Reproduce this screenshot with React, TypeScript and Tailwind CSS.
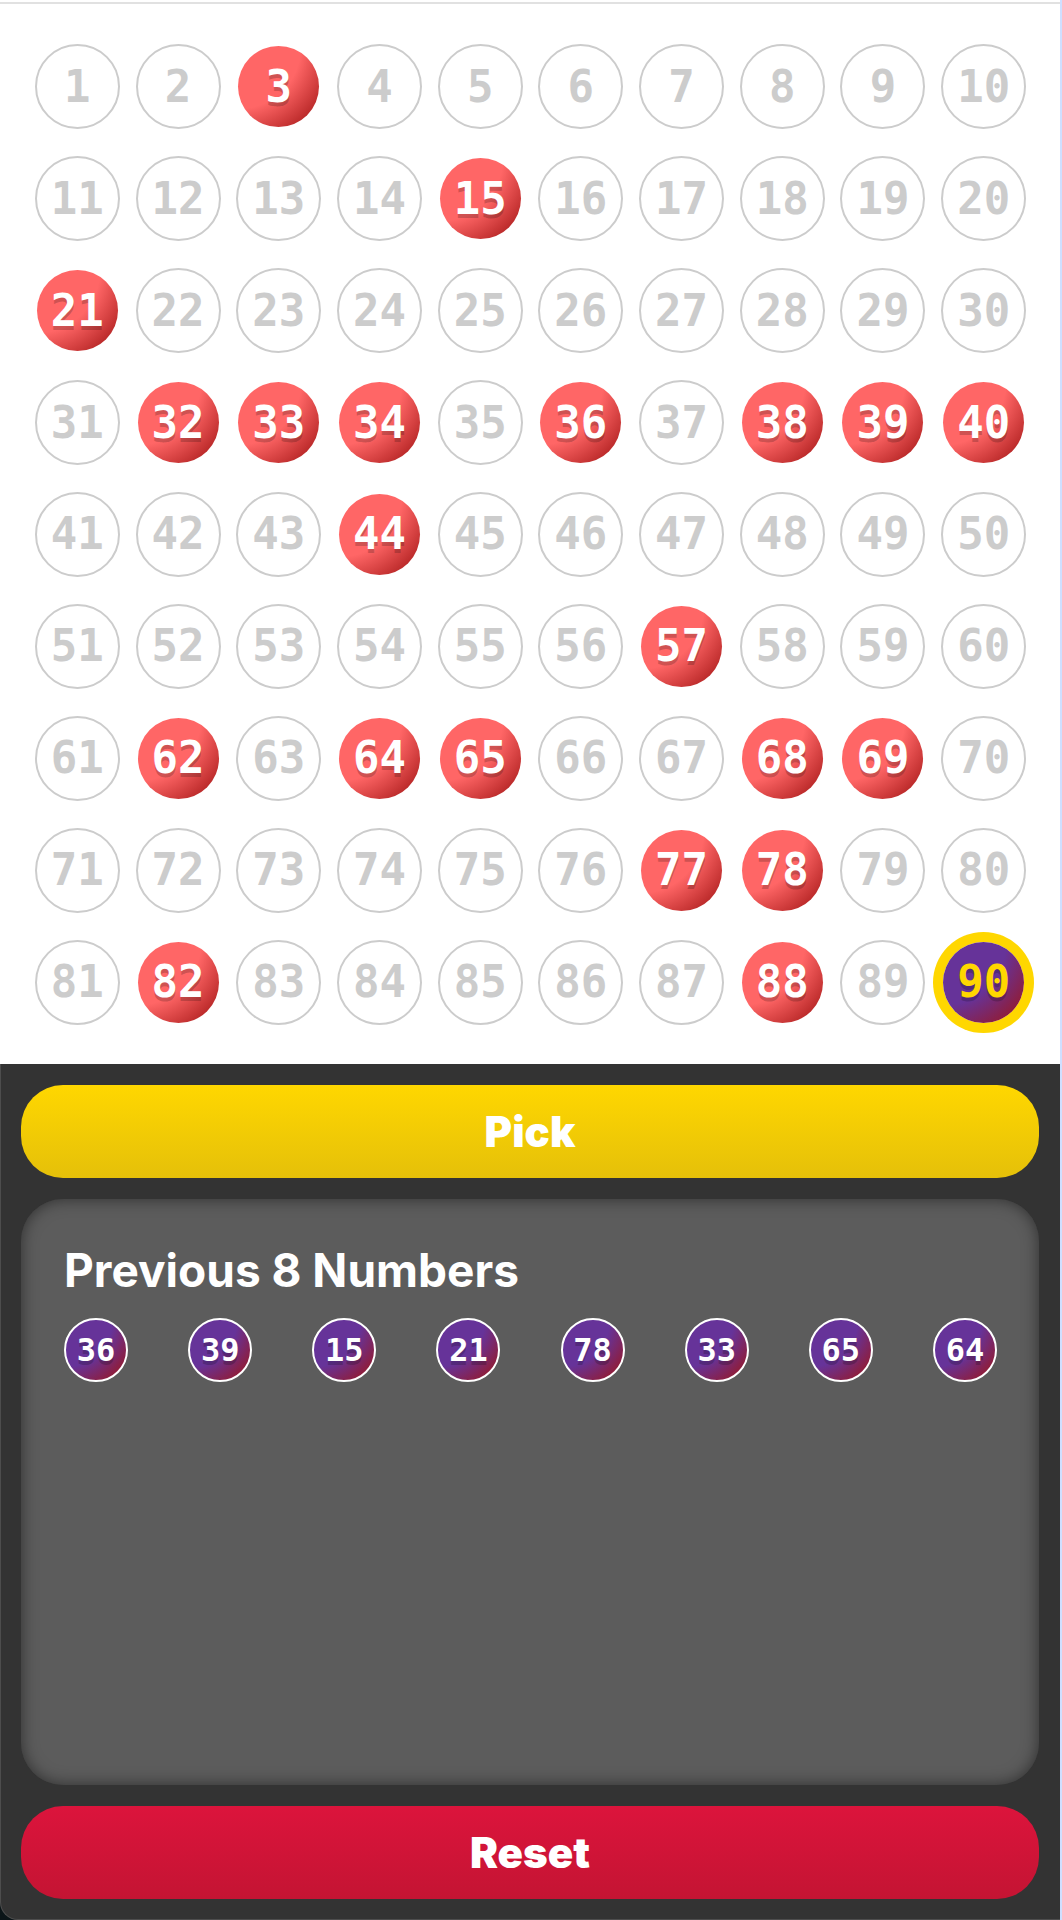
const called = [3, 15, 21, 32, 33, 34, 36, 38, 39, 40, 44, 57, 62, 64, 65, 68, 69, 77, 78, 82, 88];
const previous = [36, 39, 15, 21, 78, 33, 65, 64];
const current = 90;

const mono = "font-['DejaVu_Sans_Mono',monospace] font-bold leading-none";
const idle = "size-[85px] border-2 border-[#ccc] text-[#ccc]";
const picked =
  "size-[81px] bg-[radial-gradient(circle_at_top_left,#ff6666_55%,#b22222_90%)] text-white [text-shadow:0_4px_0_rgba(0,0,0,0.2)]";
const latest =
  "size-[81px] bg-[radial-gradient(circle_at_top_left,#663399_55%,#941a2e_90%)] text-[#ffd700] shadow-[0_0_0_10px_#ffd700] [text-shadow:0_4px_0_rgba(0,0,0,0.2)]";

function Board() {
  return (
    <section aria-label="Board" className="border-t-2 border-[#e1e1e1] bg-white pt-[27px] pr-[26px] pb-[26px] pl-[27px]">
      <ol className="grid aspect-square grid-cols-10 grid-rows-9 place-items-center">
        {Array.from({ length: 90 }, (_, i) => i + 1).map((n) => (
          <li
            key={n}
            className={`flex items-center justify-center rounded-full text-[44px] ${mono} ${
              n === current ? latest : called.includes(n) ? picked : idle
            }`}
          >
            {n}
          </li>
        ))}
      </ol>
    </section>
  );
}

function Previous() {
  return (
    <section className="grow rounded-[42px] bg-[#5c5c5c] pt-[41px] pr-[42px] pl-[43px] shadow-[inset_0_0_16px_rgba(0,0,0,0.5)]">
      <h2 className="text-[46px] leading-[60px] font-bold text-white">Previous 8 Numbers</h2>
      <ul className="mt-[18px] flex justify-between">
        {previous.map((n) => (
          <li
            key={n}
            className={`flex size-16 items-center justify-center rounded-full border-2 border-white bg-[radial-gradient(circle_at_top_left,#663399_55%,#941a2e_90%)] text-[32px] text-white [text-shadow:0_4px_0_rgba(0,0,0,0.2)] ${mono}`}
          >
            {n}
          </li>
        ))}
      </ul>
    </section>
  );
}

const action = "h-[93px] w-full shrink-0 rounded-[42px] text-[42px] leading-none font-black text-white";

export default function App() {
  return (
    <main className="flex min-h-screen flex-col border-r-2 border-[#cfdfff] bg-[#0b1518] font-['Inter',sans-serif]">
      <div className="bg-white pt-0.5">
        <Board />
      </div>
      <div className="flex grow flex-col gap-[21px] rounded-bl-[18px] border-b border-l border-[#4d4d4d] bg-[#333] pt-[21px] pr-[21px] pb-5 pl-5">
        <button type="button" className={`${action} bg-linear-to-b from-[#ffd700] to-[#e5c009]`}>
          Pick
        </button>
        <Previous />
        <button type="button" className={`${action} bg-linear-to-b from-[#dc143c] to-[#c41433]`}>
          Reset
        </button>
      </div>
    </main>
  );
}
